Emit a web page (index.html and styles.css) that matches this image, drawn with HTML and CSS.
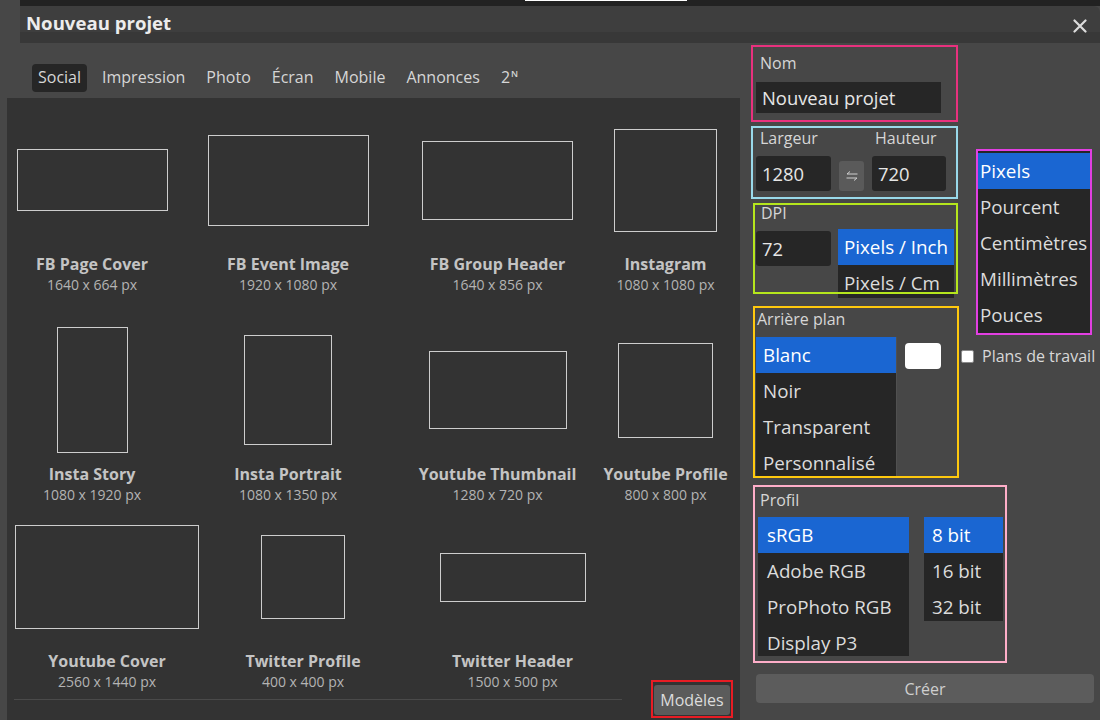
FILE: index.html
```html
<!DOCTYPE html>
<html lang="fr">
<head>
<meta charset="utf-8">
<title>Nouveau projet</title>
<link rel="stylesheet" href="styles.css">
</head>
<body>
<div class="topstrip"><span class="topline"></span></div>
<header class="titlebar">
  <h1 class="title">Nouveau projet</h1>
  <span class="close" aria-label="Fermer">
    <svg width="14" height="14" viewBox="0 0 14 14"><path d="M1.5 1.5 L12.5 12.5 M12.5 1.5 L1.5 12.5" stroke="#dcdcdc" stroke-width="2.2" stroke-linecap="round" fill="none"/></svg>
  </span>
</header>
<div class="main">
  <section class="left">
    <nav class="tabs">
      <span class="tab active">Social</span>
      <span class="tab">Impression</span>
      <span class="tab">Photo</span>
      <span class="tab">Écran</span>
      <span class="tab">Mobile</span>
      <span class="tab">Annonces</span>
      <span class="tab">2<span class="sup">N</span></span>
    </nav>
    <div class="panel">
      <div class="row row1">
        <div class="item"><div class="preview"><div class="rect" style="width:151px;height:62px"></div></div><div class="name">FB Page Cover</div><div class="size">1640 x 664 px</div></div>
        <div class="item"><div class="preview"><div class="rect" style="width:161px;height:91px"></div></div><div class="name">FB Event Image</div><div class="size">1920 x 1080 px</div></div>
        <div class="item"><div class="preview"><div class="rect" style="width:151px;height:79px"></div></div><div class="name">FB Group Header</div><div class="size">1640 x 856 px</div></div>
        <div class="item"><div class="preview"><div class="rect" style="width:103px;height:103px"></div></div><div class="name">Instagram</div><div class="size">1080 x 1080 px</div></div>
      </div>
      <div class="row row2">
        <div class="item"><div class="preview"><div class="rect" style="width:71px;height:126px"></div></div><div class="name">Insta Story</div><div class="size">1080 x 1920 px</div></div>
        <div class="item"><div class="preview"><div class="rect" style="width:88px;height:110px"></div></div><div class="name">Insta Portrait</div><div class="size">1080 x 1350 px</div></div>
        <div class="item"><div class="preview"><div class="rect" style="width:138px;height:78px"></div></div><div class="name">Youtube Thumbnail</div><div class="size">1280 x 720 px</div></div>
        <div class="item"><div class="preview"><div class="rect" style="width:95px;height:95px"></div></div><div class="name">Youtube Profile</div><div class="size">800 x 800 px</div></div>
      </div>
      <div class="row row3">
        <div class="item"><div class="preview"><div class="rect" style="width:184px;height:104px"></div></div><div class="name">Youtube Cover</div><div class="size">2560 x 1440 px</div></div>
        <div class="item"><div class="preview"><div class="rect" style="width:84px;height:84px"></div></div><div class="name">Twitter Profile</div><div class="size">400 x 400 px</div></div>
        <div class="item"><div class="preview"><div class="rect" style="width:146px;height:49px"></div></div><div class="name">Twitter Header</div><div class="size">1500 x 500 px</div></div>
      </div>
      <div class="footline"></div>
      <div class="models"><span class="models-btn">Modèles</span></div>
    </div>
  </section>

  <section class="right">
    <div class="box nom">
      <div class="label">Nom</div>
      <div class="input name-input">Nouveau projet</div>
    </div>

    <div class="mid">
      <div class="col-left">
        <div class="box dims">
          <div class="dims-row">
            <div class="field f1">
              <div class="label">Largeur</div>
              <div class="input">1280</div>
            </div>
            <div class="swap">
              <svg width="12" height="10" viewBox="0 0 12 10"><path d="M11.5 3 H1 L4 0.5 M0.5 7 H11 L8 9.5" stroke="#cfcfcf" stroke-width="1" fill="none"/></svg>
            </div>
            <div class="field f2">
              <div class="label">Hauteur</div>
              <div class="input">720</div>
            </div>
          </div>
        </div>

        <div class="box dpi">
          <div class="label dpi-label">DPI</div>
          <div class="dpi-row">
            <div class="input dpi-input">72</div>
            <div class="list dpi-list">
              <div class="opt sel">Pixels / Inch</div>
              <div class="opt">Pixels / Cm</div>
            </div>
          </div>
        </div>

        <div class="box bg">
          <div class="label bg-label">Arrière plan</div>
          <div class="bg-row">
            <div class="list bg-list">
              <div class="opt sel">Blanc</div>
              <div class="opt">Noir</div>
              <div class="opt">Transparent</div>
              <div class="opt">Personnalisé</div>
            </div>
            <div class="swatch"></div>
          </div>
        </div>
      </div>

      <div class="col-side">
        <div class="box units">
          <div class="opt sel">Pixels</div>
          <div class="opt">Pourcent</div>
          <div class="opt">Centimètres</div>
          <div class="opt">Millimètres</div>
          <div class="opt">Pouces</div>
        </div>
        <label class="check"><span class="checkbox"></span>Plans de travail</label>
      </div>
    </div>

    <div class="box profil">
      <div class="label profil-label">Profil</div>
      <div class="profil-row">
        <div class="list prof-list">
          <div class="opt sel">sRGB</div>
          <div class="opt">Adobe RGB</div>
          <div class="opt">ProPhoto RGB</div>
          <div class="opt">Display P3</div>
        </div>
        <div class="list bit-list">
          <div class="opt sel">8 bit</div>
          <div class="opt">16 bit</div>
          <div class="opt">32 bit</div>
        </div>
      </div>
    </div>

    <div class="create">Créer</div>
  </section>
</div>
</body>
</html>
```

FILE: styles.css
```css
* { box-sizing: border-box; margin: 0; padding: 0; }

body {
  width: 1100px;
  height: 720px;
  overflow: hidden;
  background: #474747;
  font-family: "Open Sans", "Noto Sans", sans-serif;
  color: #d8d8d8;
}

.topstrip {
  height: 6px;
  margin-left: 20px;
  background: #222222;
  display: flex;
}
.topline {
  display: block;
  width: 162px;
  height: 1px;
  margin-left: 505px;
  background: #ffffff;
}

.titlebar {
  height: 37px;
  margin-left: 20px;
  background: linear-gradient(#3e3e3e 0, #3e3e3e 26px, #383838 26px, #383838 100%);
  border-top-right-radius: 6px;
  display: flex;
  align-items: flex-start;
  justify-content: space-between;
  padding: 0 13px 0 6px;
}
.title {
  margin-top: 5px;
  font-size: 18.6px;
  font-weight: 700;
  line-height: 24px;
  color: #ececec;
}
.close {
  display: flex;
  margin-top: 13px;
}

.main {
  display: flex;
  height: 677px;
}

/* left side */
.left {
  width: 740px;
  display: flex;
  flex-direction: column;
}
.tabs {
  display: flex;
  gap: 9px;
  padding: 21px 0 6px 32px;
}
.tab {
  height: 28px;
  padding: 0 6px 2px;
  line-height: 26px;
  font-size: 16px;
  color: #d6d6d6;
  border-radius: 4px;
  white-space: nowrap;
}
.tab.active { background: #262626; }
.sup {
  font-size: 9px;
  line-height: 0;
  vertical-align: 6px;
  font-weight: 600;
  margin-left: 1px;
}

.panel {
  position: relative;
  flex: 1;
  width: 733px;
  margin-left: 7px;
  background: #333333;
  padding-top: 17px;
  display: flex;
  flex-direction: column;
}
.row {
  display: grid;
  grid-template-columns: 170px 222px 197px 139px;
  align-items: start;
}
.row1 { height: 210px; }
.row2 { height: 187px; }
.row3 { height: 187px; padding-left: 15px; }

.item {
  display: flex;
  flex-direction: column;
  align-items: center;
}
.preview {
  width: 100%;
  height: 130px;
  display: flex;
  align-items: center;
  justify-content: center;
}
.rect {
  border: 1px solid #cdcdcd;
  flex: none;
}
.name {
  margin-top: 9px;
  font-size: 16px;
  font-weight: 700;
  line-height: 20px;
  color: #c4c4c4;
  white-space: nowrap;
}
.size {
  font-size: 14px;
  line-height: 22px;
  color: #b4b4b4;
  white-space: nowrap;
}
.footline {
  margin-left: 7px;
  width: 608px;
  border-top: 1px solid #4a4a4a;
}
.models {
  position: absolute;
  right: 7px;
  bottom: 2px;
  width: 82px;
  height: 38px;
  border: 2px solid #e81c24;
  padding: 3px 1px 1px;
}
.models-btn {
  display: flex;
  align-items: center;
  justify-content: center;
  height: 30px;
  background: #5b5b5b;
  border-radius: 3px;
  font-size: 16px;
  color: #dcdcdc;
}

/* right side */
.right {
  flex: 1;
  padding: 2px 0 0 11px;
  display: flex;
  flex-direction: column;
  align-items: flex-start;
}
.box { border: 2px solid transparent; }
.label {
  font-size: 16px;
  line-height: 22px;
  padding-left: 4px;
  color: #d6d6d6;
  white-space: nowrap;
}
.input {
  background: #262626;
  color: #e6e6e6;
  font-size: 18.4px;
  border-radius: 3px;
  padding-left: 6px;
  display: flex;
  align-items: center;
}

.nom {
  width: 207px;
  height: 77px;
  border-color: #e8317e;
  padding: 5px 3px 0;
}
.name-input {
  width: 185px;
  height: 31px;
  margin-top: 8px;
  border-radius: 0;
}

.mid { display: flex; margin-top: 4px; }
.col-left {
  width: 208px;
  display: flex;
  flex-direction: column;
  align-items: flex-start;
}

.dims {
  width: 207px;
  height: 73px;
  border-color: #99d9ea;
  padding: 0 3px;
}
.dims-row { display: flex; align-items: flex-end; }
.dims .label { line-height: 20px; }
.field .input { height: 35px; margin-top: 8px; }
.f1 { width: 75px; }
.f2 { width: 74px; }
.f2 .label { padding-left: 3px; }
.swap {
  width: 25px;
  height: 30px;
  margin: 0 8px;
  background: #5a5a5a;
  border-radius: 3px;
  display: flex;
  align-items: center;
  justify-content: center;
}

.dpi {
  position: relative;
  width: 205px;
  height: 91px;
  margin: 4px 0 0 2px;
  border: none;
  padding: 2px 2px 0 3px;
}
.dpi::after {
  content: "";
  position: absolute;
  inset: 0;
  border: 2px solid #b5e61d;
  pointer-events: none;
}
.dpi-label { line-height: 16px; padding-left: 5px; }
.dpi-row { display: flex; align-items: flex-start; margin-top: 8px; }
.dpi-input { width: 75px; height: 35px; margin-top: 2px; }
.dpi-list { width: 116px; height: 69px; margin-left: 7px; }

.list {
  background: #262626;
  overflow: hidden;
  flex: none;
}
.opt {
  height: 36px;
  line-height: 36px;
  font-size: 18.8px;
  padding-left: 6px;
  color: #dcdcdc;
  white-space: nowrap;
}
.opt.sel { background: #1a66d2; color: #ffffff; }

.bg {
  width: 206px;
  height: 172px;
  margin: 12px 0 0 2px;
  border-color: #ffc90e;
  padding-left: 1px;
}
.bg-label { padding-left: 1px; }
.bg-row { display: flex; align-items: flex-start; margin-top: 7px; }
.bg-list { width: 141px; height: 139px; border-right: 1px solid #505050; }
.bg-list .opt { padding-left: 7px; }
.swatch {
  width: 36px;
  height: 26px;
  margin: 6px 0 0 8px;
  background: #ffffff;
  border-radius: 4px;
}

.col-side {
  display: flex;
  flex-direction: column;
  align-items: flex-start;
}
.units {
  width: 116px;
  height: 186px;
  margin: 23px 0 0 17px;
  border-color: #e23fe2;
  background: #262626;
  padding-top: 2px;
  overflow: hidden;
}
.units .opt { padding-left: 2px; }
.check {
  display: flex;
  align-items: center;
  gap: 8px;
  margin: 10px 0 0 2px;
  font-size: 16px;
  line-height: 22px;
  color: #d8d8d8;
  white-space: nowrap;
}
.checkbox {
  width: 13px;
  height: 13px;
  background: #ffffff;
  border: 1px solid #8a8a8a;
  border-radius: 2px;
}

.profil {
  width: 254px;
  height: 178px;
  margin: 7px 0 0 2px;
  border-color: #ffaec9;
  padding: 2px 3px 0;
}
.profil-label { padding-left: 2px; }
.profil-row { display: flex; align-items: flex-start; gap: 15px; margin-top: 6px; }
.prof-list { width: 151px; height: 139px; }
.prof-list .opt { padding-left: 9px; }
.bit-list { width: 79px; height: 104px; }
.bit-list .opt { padding-left: 8px; }

.create {
  width: 338px;
  height: 29px;
  margin: 11px 0 0 5px;
  background: #5c5c5c;
  border-radius: 4px;
  display: flex;
  align-items: center;
  justify-content: center;
  font-size: 16px;
  color: #cfcfcf;
}
```
